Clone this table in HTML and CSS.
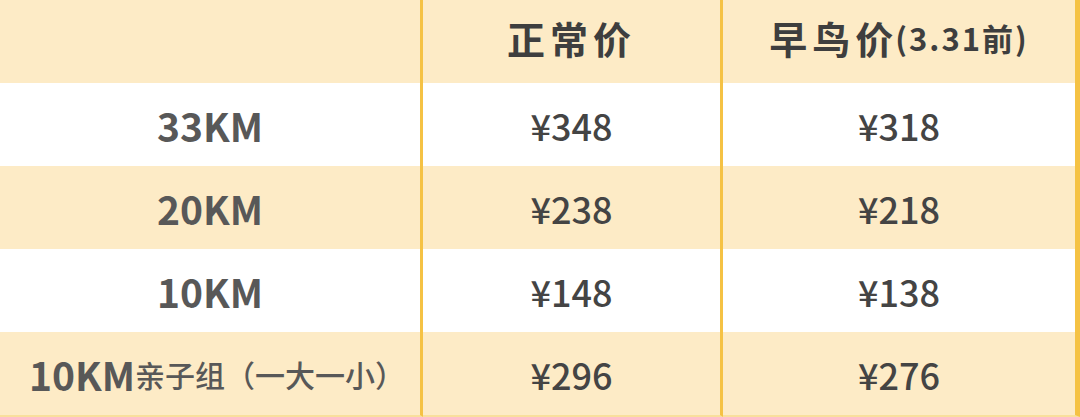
FILE: index.html
```html
<!DOCTYPE html>
<html lang="zh-CN">
<head>
<meta charset="utf-8">
<title>价格表</title>
<link rel="stylesheet" href="styles.css">
</head>
<body>
<div class="price-table">
  <div class="cell head c1"></div>
  <div class="cell head c2"><span class="head-cn">正常价</span></div>
  <div class="cell head c3"><span class="head-cn">早鸟价</span><span class="head-note">(3.31前)</span></div>

  <div class="cell row-white c1"><span class="dist">33KM</span></div>
  <div class="cell row-white c2"><span class="price">¥348</span></div>
  <div class="cell row-white c3"><span class="price">¥318</span></div>

  <div class="cell row-cream c1"><span class="dist">20KM</span></div>
  <div class="cell row-cream c2"><span class="price">¥238</span></div>
  <div class="cell row-cream c3"><span class="price">¥218</span></div>

  <div class="cell row-white c1"><span class="dist">10KM</span></div>
  <div class="cell row-white c2"><span class="price">¥148</span></div>
  <div class="cell row-white c3"><span class="price">¥138</span></div>

  <div class="cell row-cream last c1 family"><span class="dist">10KM</span><span class="dist-note">亲子组（一大一小）</span></div>
  <div class="cell row-cream last c2"><span class="price">¥296</span></div>
  <div class="cell row-cream last c3"><span class="price">¥276</span></div>
</div>
</body>
</html>
```

FILE: styles.css
```css
html, body {
  margin: 0;
  padding: 0;
  background: #fdebc6;
}

body {
  width: 1080px;
  height: 417px;
  overflow: hidden;
  font-family: "Noto Sans CJK SC", "Noto Sans", sans-serif;
}

.price-table {
  display: grid;
  grid-template-columns: 423px 300px 357px;
  grid-auto-rows: 83px;
}

.cell {
  display: flex;
  align-items: center;
  justify-content: center;
  box-sizing: border-box;
  white-space: nowrap;
}

.c1, .c2 {
  border-right: 3px solid #f5c244;
}

.c3 {
  border-right: 5px solid #f5c244;
}

.head {
  background: #fdebc6;
  padding-bottom: 8px;
}

.row-white {
  background: #ffffff;
  padding-top: 1px;
}

.row-cream {
  background: #fdebc6;
  padding-top: 1px;
}

.last {
  border-bottom: 2px solid #f9df9c;
  height: 85px;
}

.family {
  padding-left: 14px;
}

.head-cn {
  font-size: 38px;
  font-weight: 700;
  color: #3e3e3e;
  letter-spacing: 5px;
}

.head-note {
  font-size: 31px;
  font-weight: 700;
  color: #3e3e3e;
  letter-spacing: 2px;
  margin-left: -3px;
}

.dist {
  font-size: 39px;
  font-weight: 700;
  color: #585858;
}

.dist-note {
  font-size: 30px;
  font-weight: 500;
  color: #585858;
}

.price {
  font-size: 36px;
  font-weight: 500;
  color: #444444;
}
```
